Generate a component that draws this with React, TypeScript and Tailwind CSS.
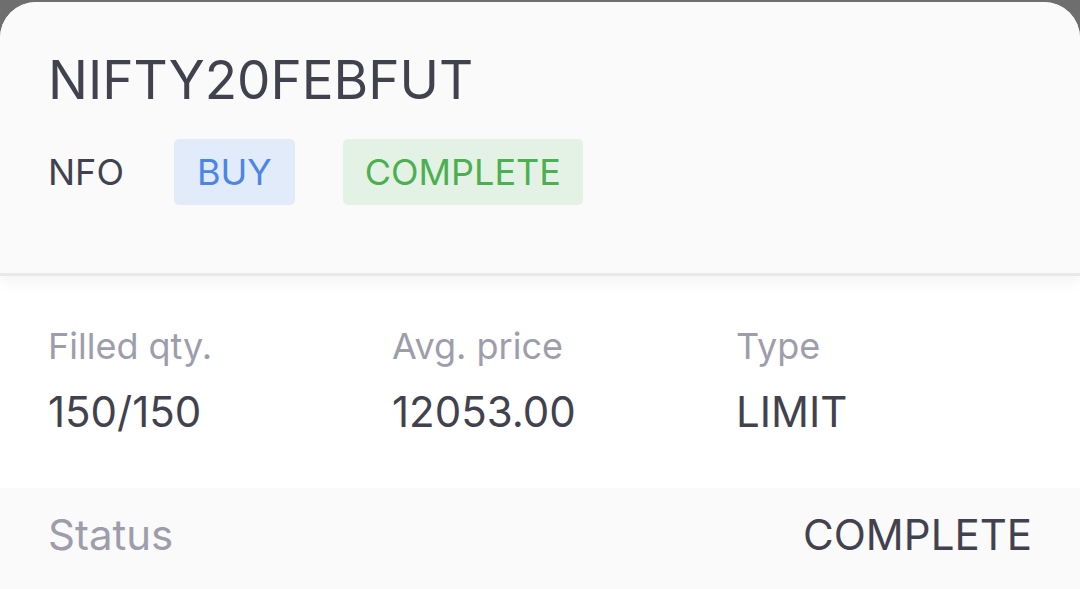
const details = [
  { label: 'Filled qty.', value: '150/150' },
  { label: 'Avg. price', value: '12053.00' },
  { label: 'Type', value: 'LIMIT' },
]

export default function App() {
  return (
    <div
      className="h-[589px] w-[1080px] overflow-hidden bg-[#6e6e6e] pt-[2px]"
      style={{ fontFamily: 'Inter, "Noto Sans", sans-serif' }}
    >
      <div className="h-full overflow-hidden rounded-t-[36px] bg-white">
        <div className="relative z-10 border-b-[3px] border-[#e8e8e8] bg-[#fafafa] pb-[68px] pl-[48px] pt-[46px] shadow-[0_6px_14px_rgba(0,0,0,0.05)]">
          <h1 className="text-[53px] font-normal leading-[64px] text-[#42424f]">
            NIFTY20FEBFUT
          </h1>
          <div className="mt-[27px] flex items-center text-[36px] leading-[66px]">
            <span className="mr-[50px] text-[#42424f]">NFO</span>
            <span className="mr-[48px] h-[66px] rounded-[5px] bg-[#e2ebfa] px-[23px] text-[#4a86e8]">
              BUY
            </span>
            <span className="h-[66px] rounded-[5px] bg-[#e4f2e5] px-[22px] text-[#4caf50]">
              COMPLETE
            </span>
          </div>
        </div>

        <div className="grid grid-cols-3 bg-white pb-[48px] pl-[48px] pt-[46px]">
          {details.map((item) => (
            <div key={item.label}>
              <div className="text-[36px] leading-[48px] text-[#9d9dab]">{item.label}</div>
              <div className="mt-[14px] text-[42px] leading-[56px] text-[#42424f]">
                {item.value}
              </div>
            </div>
          ))}
        </div>

        <div className="flex items-center justify-between bg-[#fafafa] pl-[48px] pr-[48px] pb-[40px] pt-[19px] text-[42px] leading-[56px]">
          <span className="text-[#9d9dab]">Status</span>
          <span className="text-[#42424f]">COMPLETE</span>
        </div>
      </div>
    </div>
  )
}
